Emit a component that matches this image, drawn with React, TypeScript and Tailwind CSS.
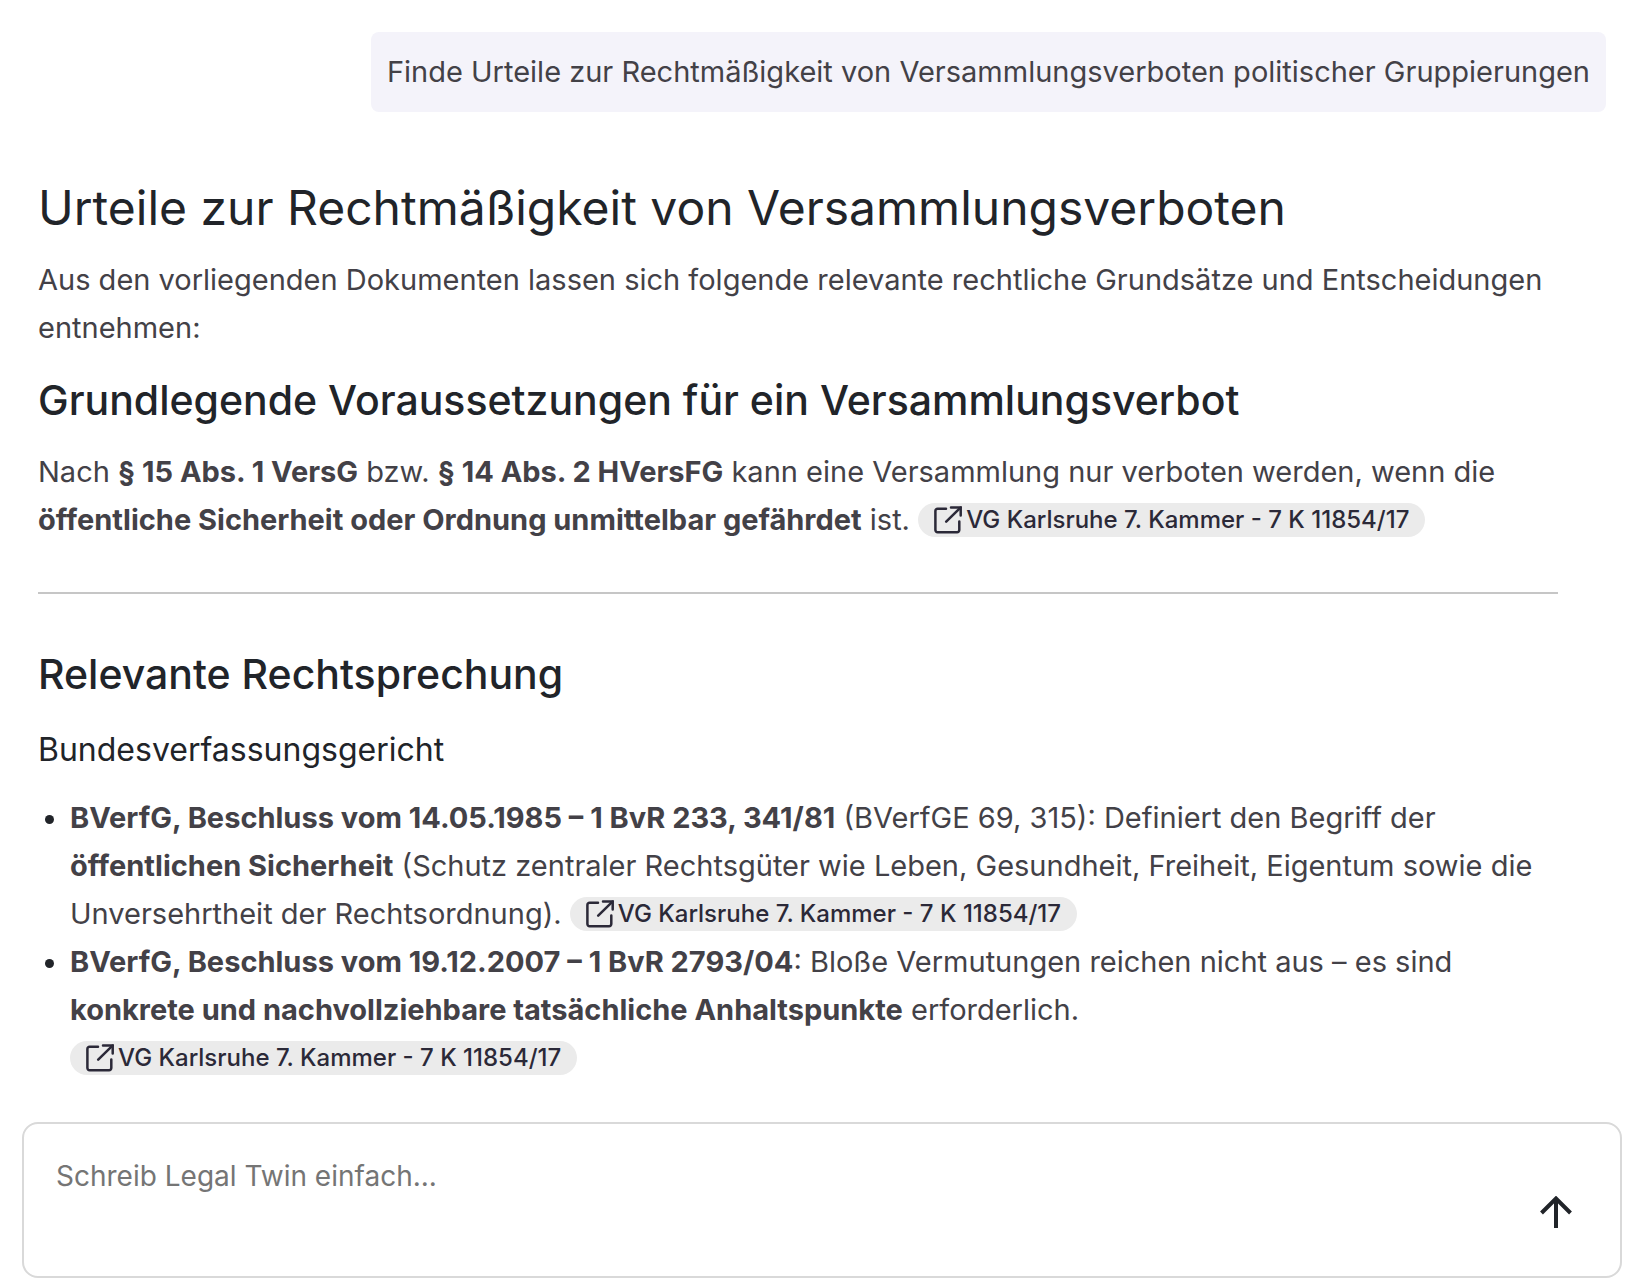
function SourceLink() {
  return (
    <a
      href="#quelle"
      className="mb-1 inline-flex h-[34px] items-center rounded-full bg-[#ebebeb] px-4 align-middle text-2xl font-medium whitespace-nowrap text-[#2b2938]"
    >
      <svg
        viewBox="0 0 28 28"
        className="mr-1 h-7 w-7 shrink-0"
        fill="none"
        stroke="currentColor"
        strokeWidth="2.5"
        strokeLinecap="round"
        strokeLinejoin="miter"
        aria-hidden="true"
      >
        <path d="M12 2.700H3.600A2.200 2.200 0 0 0 1.400 4.900V24.100a2.200 2.200 0 0 0 2.200 2.200H23.100a2.200 2.200 0 0 0 2.200-2.200V15.500" />
        <path d="M17 1.400H26.700V9.500" />
        <path d="M26.500 1.600 12.200 15.600" />
      </svg>
      VG Karlsruhe 7. Kammer - 7 K 11854/17
    </a>
  );
}

export default function App() {
  return (
    <main className="flex min-h-screen flex-col bg-white font-['Inter',sans-serif] text-[29px] leading-[48px] text-[#434147]">
      <div className="flex justify-end pt-8 pr-11 pl-[38px]">
        <p className="rounded-lg bg-[#f4f3fa] p-4">
          Finde Urteile zur Rechtmäßigkeit von Versammlungsverboten politischer Gruppierungen
        </p>
      </div>

      <article className="mt-[68px] mr-[92px] ml-[38px]">
        <h1 className="text-5xl leading-[56px] text-[#212429]">
          Urteile zur Rechtmäßigkeit von Versammlungsverboten
        </h1>
        <p className="mt-5">
          Aus den vorliegenden Dokumenten lassen sich folgende relevante rechtliche Grundsätze und Entscheidungen
          entnehmen:
        </p>

        <h2 className="mt-6 text-[41px] leading-[48px] font-medium text-[#212429]">
          Grundlegende Voraussetzungen für ein Versammlungsverbot
        </h2>
        <p className="mt-6">
          Nach <strong>§ 15 Abs. 1 VersG</strong> bzw. <strong>§ 14 Abs. 2 HVersFG</strong> kann eine Versammlung nur
          verboten werden, wenn die{" "}
          <strong>öffentliche Sicherheit oder Ordnung unmittelbar gefährdet</strong> ist. <SourceLink />
        </p>

        <hr className="mt-12 border-t-2 border-[#c6c6c6]" />

        <h2 className="mt-14 text-[41px] leading-[48px] font-medium text-[#212429]">Relevante Rechtsprechung</h2>
        <h3 className="mt-8 text-[32px] leading-[40px] text-[#212429]">Bundesverfassungsgericht</h3>
        <ul className="mt-6 list-disc pl-8 marker:text-[#212429]">
          <li>
            <strong>BVerfG, Beschluss vom 14.05.1985 – 1 BvR 233, 341/81</strong> (BVerfGE 69, 315): Definiert den
            Begriff der
            <br />
            <strong>öffentlichen Sicherheit</strong> (Schutz zentraler Rechtsgüter wie Leben, Gesundheit, Freiheit,
            Eigentum sowie die
            <br />
            Unversehrtheit der Rechtsordnung). <SourceLink />
          </li>
          <li>
            <strong>BVerfG, Beschluss vom 19.12.2007 – 1 BvR 2793/04</strong>: Bloße Vermutungen reichen nicht aus – es
            sind <strong>konkrete und nachvollziehbare tatsächliche Anhaltspunkte</strong> erforderlich.{" "}
            <SourceLink />
          </li>
        </ul>
      </article>

      <form
        className="mt-10 mr-7 mb-2 ml-[22px] flex items-end rounded-2xl border-2 border-[#d9d9d9] pr-8"
        onSubmit={(event) => event.preventDefault()}
      >
        <textarea
          aria-label="Nachricht"
          placeholder="Schreib Legal Twin einfach..."
          rows={2}
          className="block h-[152px] min-w-0 flex-1 resize-none bg-transparent px-8 pt-7 text-[28px] outline-none placeholder:text-[#757575]"
        />
        <button type="submit" aria-label="Senden" className="mb-10 flex h-12 w-16 items-center justify-center">
          <svg viewBox="0 0 32 32" className="h-8 w-8" fill="none" stroke="#212429" strokeWidth="4" aria-hidden="true">
            <path d="M1.500 17 16 2.500 30.500 17M16 2.500V32" />
          </svg>
        </button>
      </form>
    </main>
  );
}
